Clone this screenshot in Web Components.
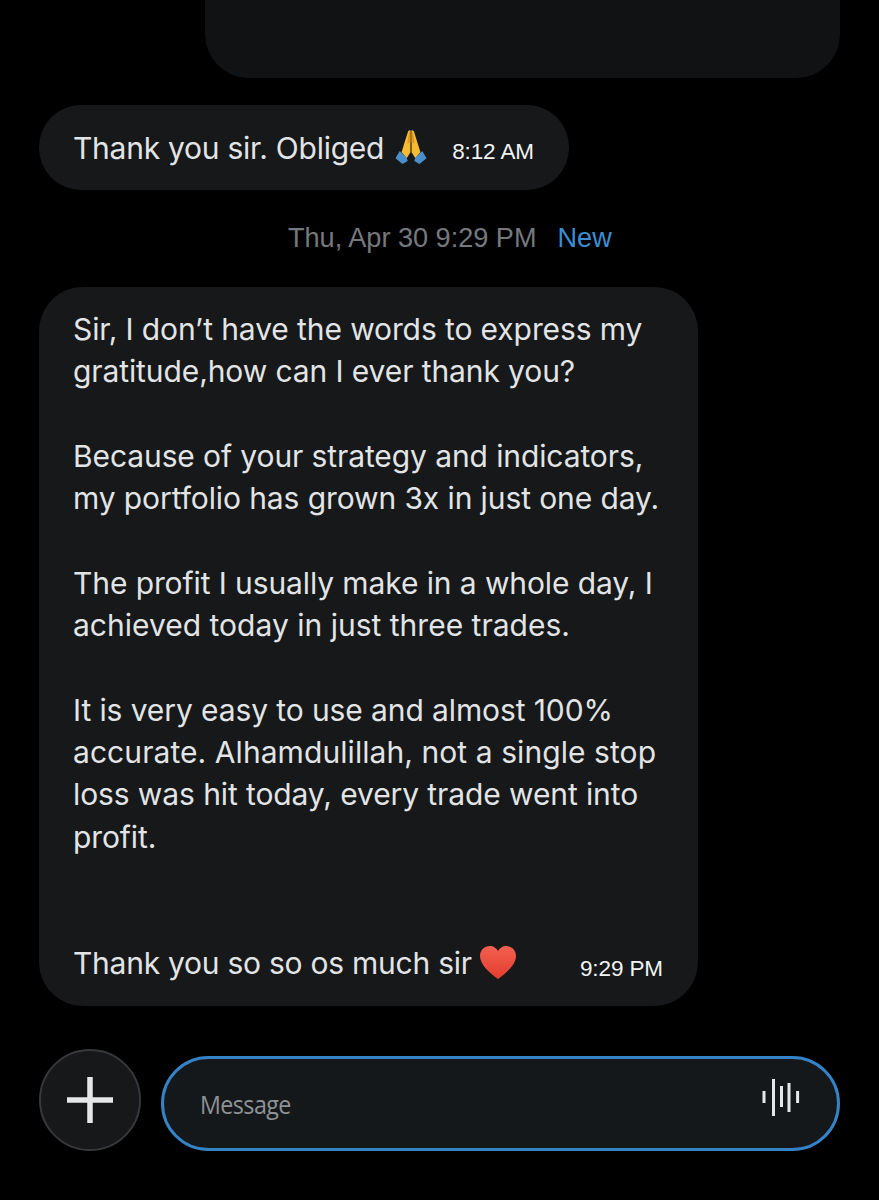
<!DOCTYPE html>
<html>
<head>
<meta charset="utf-8">
<style>
  html, body { margin: 0; background: #000; }
  body { width: 879px; height: 1200px; overflow: hidden; font-family: Inter, "Noto Sans", sans-serif; }
  .wider { letter-spacing: 0.07px; }
  .wide2 { letter-spacing: 0.01px; }
  .close { letter-spacing: -0.25px; }
</style>
</head>
<body>
<chat-page>
  <chat-bubble time="8:12 AM" tight><span class="close">Thank you sir. Obliged</span> <pray-icon></pray-icon></chat-bubble>
  <date-divider when="Thu, Apr 30 9:29 PM" label="New"></date-divider>
  <chat-bubble time="9:29 PM" wide>
    <p>Sir, I don’t have the words to express my<br>gratitude,how can I ever thank you?</p>
    <p>Because of your strategy and indicators,<br>my portfolio has grown 3x in just one day.</p>
    <p>The profit I usually make in a whole day, I<br><span class="wide2">achieved today in just three trades.</span></p>
    <p>It is very easy to use and almost 100%<br><span class="wider">accurate. Alhamdulillah, not a single stop</span><br>loss was hit today, every trade went into<br>profit.</p>
    <p class="last"><span class="close">Thank you so so os much sir</span> <heart-icon></heart-icon></p>
  </chat-bubble>
  <message-composer></message-composer>
</chat-page>

<script>
class ChatPage extends HTMLElement {
  constructor() {
    super();
    this.attachShadow({ mode: 'open' }).innerHTML = `
      <style>
        :host { display: flex; flex-direction: column; align-items: flex-start; height: 1200px; padding: 0 39px; box-sizing: border-box; }
        .top { align-self: flex-end; width: 635px; height: 78px; background: #101214; border-radius: 0 0 44px 44px; margin-bottom: 27px; }
      </style>
      <div class="top"></div>
      <slot></slot>`;
  }
}

class ChatBubble extends HTMLElement {
  constructor() {
    super();
    const time = this.getAttribute('time') || '';
    this.attachShadow({ mode: 'open' }).innerHTML = `
      <style>
        :host { display: block; position: relative; box-sizing: border-box; background: #16181a; color: #e2e4e5; font: 400 30px/42.3px Inter, sans-serif; letter-spacing: -0.1px; }
        :host([tight]) { width: 530px; height: 85px; border-radius: 42px; padding: 22px 34px; white-space: nowrap; }
        :host([wide]) { width: 659px; height: 719px; border-radius: 44px; padding: 21px 34px; white-space: nowrap; }
        .time { position: absolute; right: 35px; bottom: 25px; font: 400 22.5px/26px "Liberation Sans", Arial, sans-serif; letter-spacing: -0.1px; color: #f2f3f4; }
        :host([wide]) .time { bottom: 24px; }
        ::slotted(p) { margin: 0 0 42.3px; }
        ::slotted(p.last) { margin-top: 84.6px; margin-bottom: 0; }
      </style>
      <slot></slot><span class="time">${time}</span>`;
  }
}

class DateDivider extends HTMLElement {
  constructor() {
    super();
    this.attachShadow({ mode: 'open' }).innerHTML = `
      <style>
        :host { display: flex; align-self: stretch; box-sizing: border-box; padding: 32px 0 33px 249px; gap: 21px; font: 400 27.1px/32px "Liberation Sans", Arial, sans-serif; color: #75797d; }
        .new { color: #3b8ed4; }
      </style>
      <span>${this.getAttribute('when')}</span><span class="new">${this.getAttribute('label')}</span>`;
  }
}

class PrayIcon extends HTMLElement {
  constructor() {
    super();
    this.attachShadow({ mode: 'open' }).innerHTML = `
      <style>:host { display: inline-block; width: 32px; height: 35px; vertical-align: -5px; margin-left: 2px; } svg { display: block; }</style>
      <svg width="32" height="35" viewBox="0 0 34 36" preserveAspectRatio="none">
        <path d="M16.4 1 L14 2 L9.5 16 L7 24 L12.500 30 L16.400 24 Z" fill="#f6bc31"/>
        <path d="M17.6 1 L20 2 L24.5 16 L27 24 L21.500 30 L17.600 24 Z" fill="#f6bc31"/>
        <path d="M16.4 2 L15 3 L13 15 L16.4 14 Z M17.6 2 L19 3 L21 15 L17.6 14 Z" fill="#e49a22"/>
        <path d="M5 22.5 L0.5 30 L8 36 L13.5 33 L12.500 29.500 Z" fill="#4a8fcb"/>
        <path d="M29 22.5 L33.5 30 L26 36 L20.5 33 L21.500 29.500 Z" fill="#4a8fcb"/>
      </svg>`;
  }
}

class HeartIcon extends HTMLElement {
  constructor() {
    super();
    this.attachShadow({ mode: 'open' }).innerHTML = `
      <style>:host { display: inline-block; width: 36px; height: 33px; vertical-align: -5px; } svg { display: block; }</style>
      <svg width="36" height="33" viewBox="0 0 36 33">
        <defs><linearGradient id="h" x1="0" y1="0" x2="0" y2="1"><stop offset="0" stop-color="#f4604f"/><stop offset="1" stop-color="#e23d30"/></linearGradient></defs>
        <path d="M18 33 C10 27 0 19 0 10 C0 4 4.5 0 10 0 C13.5 0 16.5 2 18 5 C19.5 2 22.5 0 26 0 C31.5 0 36 4 36 10 C36 19 26 27 18 33 Z" fill="url(#h)"/>
      </svg>`;
  }
}

class MessageComposer extends HTMLElement {
  constructor() {
    super();
    this.attachShadow({ mode: 'open' }).innerHTML = `
      <style>
        :host { display: flex; align-self: stretch; gap: 20px; align-items: flex-start; margin-top: 43px; }
        .add { flex: none; width: 102px; height: 102px; box-sizing: border-box; border-radius: 50%; background: #16181a; border: 2px solid #36393b; display: flex; align-items: center; justify-content: center; }
        .input { flex: 1; height: 95px; margin-top: 7px; box-sizing: border-box; border: 3px solid #3583c7; border-radius: 48px; background: #15181b; display: flex; align-items: center; justify-content: space-between; padding: 0 37px 0 36px; }
        .ph { font: 400 25px/30px "Open Sans", sans-serif; letter-spacing: -0.6px; color: #8f9295; transform: scaleX(0.93); transform-origin: left; }
        .wave { margin-bottom: 12px; }
        svg { display: block; }
      </style>
      <div class="add">
        <svg width="48" height="48" viewBox="0 0 48 48"><path d="M24 1V47M1 24H47" stroke="#e6e7e8" stroke-width="5.500"/></svg>
      </div>
      <div class="input">
        <span class="ph">Message</span>
        <svg class="wave" width="38" height="37" viewBox="0 0 38 37"><path d="M2 12V24M11.500 0V37M19.500 7V28M27 4V33M35.600 12V24" stroke="#e6e7e8" stroke-width="3" fill="none"/></svg>
      </div>`;
  }
}

customElements.define('chat-page', ChatPage);
customElements.define('chat-bubble', ChatBubble);
customElements.define('date-divider', DateDivider);
customElements.define('pray-icon', PrayIcon);
customElements.define('heart-icon', HeartIcon);
customElements.define('message-composer', MessageComposer);
</script>
</body>
</html>
